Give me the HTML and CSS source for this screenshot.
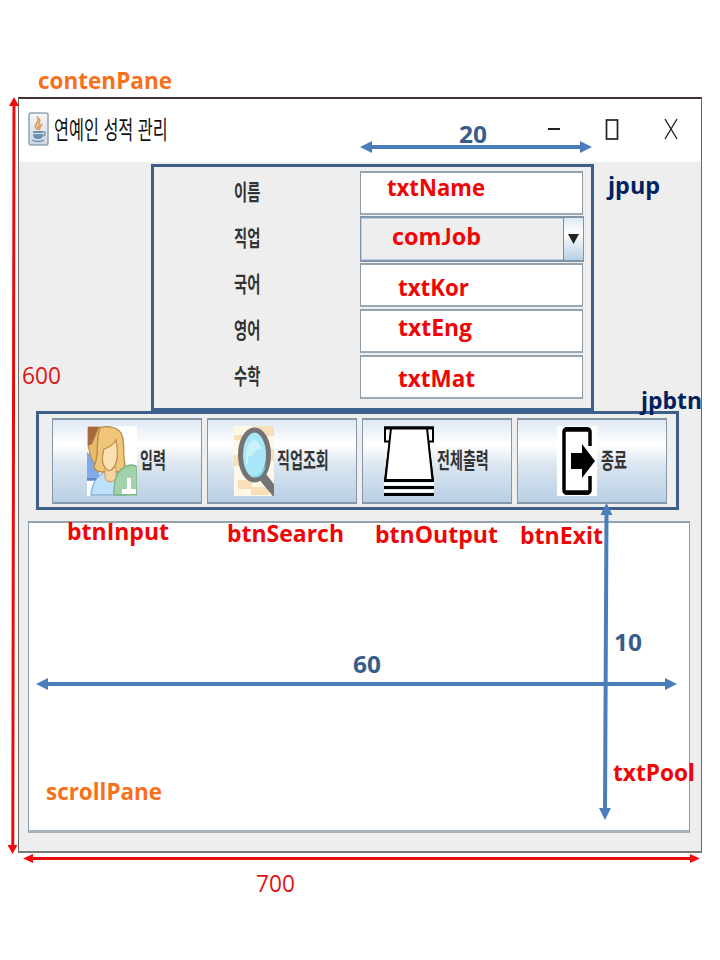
FILE: index.html
```html
<!DOCTYPE html>
<html lang="ko">
<head>
<meta charset="utf-8">
<title>연예인 성적 관리</title>
<link rel="stylesheet" href="styles.css">
</head>
<body>
<main class="window">
  <header class="titlebar">
    <svg class="app-icon" width="21" height="34" viewBox="0 0 21 34">
      <defs><linearGradient id="cup" x2="0" y2="1"><stop offset="0" stop-color="#f6f8fa"/><stop offset="1" stop-color="#cbd7e2"/></linearGradient></defs>
      <rect x="1" y="1" width="19" height="32" rx="2" fill="url(#cup)" stroke="#91a5b7" stroke-width="1.5"/>
      <path d="M10 18C3 13 12 11 10 6c5 4-2 7 0 12M12 18c-2-3 1-4 2-6" fill="none" stroke="#e59a56" stroke-width="1.7"/>
      <path d="M5 19h10v3c0 4-2 5-5 5s-5-1-5-5z" fill="#6e91b0"/>
      <path d="M15 20c3-1 3 3 0 4M4 28c3 2 9 2 12 0" fill="none" stroke="#6e91b0" stroke-width="1.4"/>
      <path d="M5 21.500h10" stroke="#d7e2eb"/>
    </svg>
    <h1 class="title"><span class="narrow">연예인 성적 관리</span></h1>
    <svg class="controls" width="132" height="24" viewBox="0 0 132 24" fill="none" stroke="#222">
      <path d="M1 12h12" stroke-width="2"/>
      <rect x="59.500" y="3" width="11" height="19" stroke-width="1.700"/>
      <path d="M118 2l12 20M130 2l-12 20" stroke-width="1.400"/>
    </svg>
  </header>
  <section class="form">
    <div class="row"><label><span class="narrow">이름</span></label><div class="field"></div></div>
    <div class="row"><label><span class="narrow">직업</span></label><div class="combo"><div class="drop"><svg width="12" height="10"><path d="M0 0h11L5.500 10z" fill="#222"/></svg></div></div></div>
    <div class="row"><label><span class="narrow">국어</span></label><div class="field"></div></div>
    <div class="row"><label><span class="narrow">영어</span></label><div class="field"></div></div>
    <div class="row"><label><span class="narrow">수학</span></label><div class="field"></div></div>
  </section>
  <section class="buttons">
    <button class="btn input">
      <svg width="50" height="70" viewBox="0 0 50 70">
        <rect width="50" height="70" fill="#fff"/>
        <path d="M0 26l12 10v19H0z" fill="#83a9e6"/><path d="M0 53h10" stroke="#6186c6" stroke-width="2"/>
        <path d="M1 1h14L9 38C3 34 3 27 1 20z" fill="#e7b96b" stroke="#b58645"/>
        <path d="M1 1h11L5 18 1 20z" fill="#a7693e"/>
        <path d="M4 69c1-12 7-20 15-24h9c7 2 11 12 11 24z" fill="#bfe0fa" stroke="#83b0d5" stroke-width="1.300"/>
        <path d="M13 2c7-3 17-1 21 5 5 10 1 20 4 31 0 6-5 8-9 8H15c-4 0-8-2-8-6 6-9 1-27 6-38z" fill="#efc67a" stroke="#b88c49" stroke-width="1.300"/>
        <path d="M18 41v11c2 5 9 5 11 0V41z" fill="#f6d39c" stroke="#c99a59"/>
        <path d="M17 23c6-2 10-5 12-9 2 11 3 27-7 31-7-4-8-12-5-22z" fill="#fae0b0" stroke="#bd914f" stroke-width="1.300"/>
        <path d="M27 69c-1-18 6-30 18-30 2 0 4 1 5 2v28z" fill="#a3d2aa" stroke="#79b583" stroke-width="1.300"/>
        <path d="M40 52h4v11h5v5H35v-5h5z" fill="#fff"/>
      </svg><span class="narrow">입력</span>
    </button>
    <button class="btn search">
      <svg width="40" height="70" viewBox="0 0 40 70">
        <rect width="40" height="70" fill="#fff8e8"/>
        <path d="M0 9h8v5H0zM18 0h22v10H27zM0 29h8v11H0zM32 23h8v12h-8zM4 54h14v9H4zM17 61h18v8H17z" fill="#f8dfb8"/>
        <path d="M30 47l10 13v10L27 54z" fill="#747474" stroke="#747474" stroke-width="2"/>
        <ellipse cx="20.500" cy="29" rx="14" ry="25" fill="#a8e6f8" stroke="#747474" stroke-width="5"/>
        <path d="M12 29c0-7 3-13 7-15 4 0 7 4 8 9l-5 1-4 6h-4v8h-2z" fill="#c9f2fb"/>
        <path d="M16 48c6 5 12 1 16-10-1 10-8 18-16 10z" fill="#72d7ef"/>
      </svg><span class="narrow">직업조회</span>
    </button>
    <button class="btn output">
      <svg width="50" height="70" viewBox="0 0 50 70">
        <path d="M1 1.500h48v14H44L49 54H1L6 15.500H1z" fill="#fff" stroke="#000" stroke-width="2"/>
        <path d="M7 2L1.500 54h47L43 2" fill="#fff" stroke="#000" stroke-width="2"/>
        <path d="M0 2h50M0 54.500h50M0 61.500h50M0 68.500h50" stroke="#000" stroke-width="3"/>
        <path d="M0 58h50M0 65h50" stroke="#fff" stroke-width="3"/>
      </svg><span class="narrow">전체출력</span>
    </button>
    <button class="btn exit">
      <svg width="40" height="70" viewBox="0 0 40 70">
        <rect width="40" height="70" fill="#fff"/>
        <path d="M33 20V6q0-3-3-3H10Q7 3 7 6v58q0 3 3 3h20q3 0 3-3V50" fill="none" stroke="#000" stroke-width="3.500"/>
        <path d="M8 3.500h24M8 66.500h24" stroke="#000" stroke-width="4.500"/>
        <path d="M14 27h11v-9l13 17-13 17v-9H14z" fill="#000"/>
      </svg><span class="narrow">종료</span>
    </button>
  </section>
  <section class="scroll-pane"></section>
</main>

<!-- Dimension arrows and component names laid over the window -->
<svg class="notes" width="720" height="960" viewBox="0 0 720 960">
  <g class="blue-arrow">
    <path class="line" d="M370 147H583M46 684H668M606.500 513L605 810"/>
    <path d="M360 147l12-6v12zM592 147l-12-6v12zM36 684l12-6v12zM677 684l-12-6v12zM606.500 503l-6 12h12zM605 820l-6-12h12z"/>
  </g>
  <g class="red-arrow">
    <path class="line" d="M14 105L12.800 846M31 858.500H692"/>
    <path d="M14 97l-5 9h10zM12.500 854l-5-9h10zM23 858.500l10-4.500v9zM700 858.500l-10-4.500v9z"/>
  </g>
  <g class="orange">
    <text x="38" y="89" textLength="134" lengthAdjust="spacingAndGlyphs">contenPane</text>
    <text x="46" y="800" textLength="116" lengthAdjust="spacingAndGlyphs">scrollPane</text>
  </g>
  <g class="steel">
    <text x="459" y="143" textLength="28" lengthAdjust="spacingAndGlyphs">20</text>
    <text x="353" y="673" textLength="28" lengthAdjust="spacingAndGlyphs">60</text>
    <text x="614" y="651" textLength="28" lengthAdjust="spacingAndGlyphs">10</text>
  </g>
  <g class="navy">
    <text x="608" y="194" textLength="52" lengthAdjust="spacingAndGlyphs">jpup</text>
    <text x="641" y="409" textLength="61" lengthAdjust="spacingAndGlyphs">jpbtn</text>
  </g>
  <g class="red">
    <text x="387" y="196" textLength="98" lengthAdjust="spacingAndGlyphs">txtName</text>
    <text x="392" y="245" textLength="89" lengthAdjust="spacingAndGlyphs">com<tspan class="cap-j">J</tspan>ob</text>
    <text x="398" y="296" textLength="71" lengthAdjust="spacingAndGlyphs">txtKor</text>
    <text x="398" y="336" textLength="74" lengthAdjust="spacingAndGlyphs">txtEng</text>
    <text x="398" y="387" textLength="77" lengthAdjust="spacingAndGlyphs">txtMat</text>
    <text x="67" y="540" textLength="102" lengthAdjust="spacingAndGlyphs">btnInput</text>
    <text x="227" y="542" textLength="117" lengthAdjust="spacingAndGlyphs">btnSearch</text>
    <text x="375" y="543" textLength="123" lengthAdjust="spacingAndGlyphs">btnOutput</text>
    <text x="520" y="544" textLength="83" lengthAdjust="spacingAndGlyphs">btnExit</text>
    <text x="613" y="781" textLength="82" lengthAdjust="spacingAndGlyphs">txtPool</text>
  </g>
  <g class="size">
    <text x="22" y="384" textLength="39" lengthAdjust="spacingAndGlyphs">600</text>
    <text x="256" y="892" textLength="39" lengthAdjust="spacingAndGlyphs">700</text>
  </g>
</svg>
</body>
</html>
```
FILE: styles.css
```css
* { box-sizing: border-box; }
body {
  margin: 0;
  width: 720px;
  height: 960px;
  overflow: hidden;
  position: relative;
  padding: 97px 0 0 18px;
  background: #fff;
  font-family: "Noto Sans CJK KR", sans-serif;
  color: #333;
}
.window {
  width: 684px;
  height: 756px;
  display: flex;
  flex-direction: column;
  background: #eee;
  border: 1px solid #666;
  border-top: 2px solid #482f30;
  border-bottom: 2px solid #777b77;
}
.titlebar {
  height: 63px;
  flex: none;
  display: flex;
  align-items: center;
  padding: 0 22px 3px 9px;
  background: #fff;
}
.narrow {
  display: inline-block;
  white-space: nowrap;
  transform: scaleX(.65);
  transform-origin: left center;
}
.title {
  margin: -2px 0 0 5px;
  width: 120px;
  font-size: 25px;
  line-height: 30px;
  font-weight: 400;
  color: #111;
}
.title .narrow { transform: scaleX(.65); }
.controls { margin-left: auto; }
.form {
  width: 443px;
  height: 247px;
  flex: none;
  margin: 2px 0 0 132px;
  padding: 3px 7px 0 79px;
  border: 3px solid #3c5f8c;
}
.row {
  height: 46px;
  display: flex;
  align-items: center;
}
label {
  width: 127px;
  flex: none;
  padding-left: 1px;
  font-size: 22px;
  line-height: 24px;
  font-weight: 700;
}
.row label { margin-top: -6px; }
.field {
  width: 223px;
  height: 44px;
  background: #fff;
  border: 1px solid #8b9aa7;
  border-top: 2px solid #94a2ae;
  border-bottom: 2px solid #9aaab7;
}
.combo {
  width: 224px;
  height: 46px;
  display: flex;
  flex: none;
  justify-content: flex-end;
  border: 2px solid #8195aa;
  border-width: 2px 1px;
  box-shadow: inset 0 0 0 1px #b8cfe5;
}
.drop {
  width: 20px;
  display: flex;
  align-items: center;
  justify-content: center;
  border-left: 1px solid #7a8a99;
  background: linear-gradient(#dce8f3, #fff 35%, #b8cfe5);
}
.buttons {
  width: 643px;
  height: 99px;
  flex: none;
  display: flex;
  gap: 5px;
  margin-left: 17px;
  padding: 4px 0 0 13px;
  border: 3px solid #3c5f8c;
}
.btn {
  width: 150px;
  height: 86px;
  flex: none;
  display: flex;
  align-items: center;
  justify-content: flex-start;
  gap: 3px;
  padding: 0;
  border: 2px solid #8796a4;
  border-width: 2px 1px;
  background: linear-gradient(#dfe9f3, #fff 30%, #dbe6f0 55%, #b8cfe5);
  color: #333;
  font: 700 22px/24px "Noto Sans CJK KR", sans-serif;
}
.btn svg { flex: none; }
.btn .narrow { width: 50px; margin-top: -6px; text-align: left; transform: scaleX(.64); }
.input { padding-left: 34px; }
.search { padding-left: 26px; }
.output { padding-left: 21px; }
.exit { padding-left: 39px; gap: 4px; }
.scroll-pane {
  width: 662px;
  height: 312px;
  flex: none;
  margin: 11px 0 0 9px;
  background: #fff;
  border: 1px solid #8b9aa7;
  border-top: 2px solid #94a2ae;
  border-bottom: 3px solid #a6b2bc;
}
.notes {
  position: absolute;
  left: 0;
  top: 0;
  font: 700 23px "Open Sans", "Noto Sans", sans-serif;
}
.cap-j { font-family: Lato, sans-serif; }
.line { fill: none; }
.blue-arrow { fill: #4a7ebb; }
.blue-arrow .line { stroke: #4a7ebb; stroke-width: 4; }
.red-arrow { fill: #f20d0d; }
.red-arrow .line { stroke: #e80c0c; stroke-width: 3; }
.orange { fill: #f7701a; }
.steel { fill: #385d8a; }
.navy { fill: #002060; }
.red { fill: #f00505; }
.size { fill: #e01515; font-weight: 400; }
```
